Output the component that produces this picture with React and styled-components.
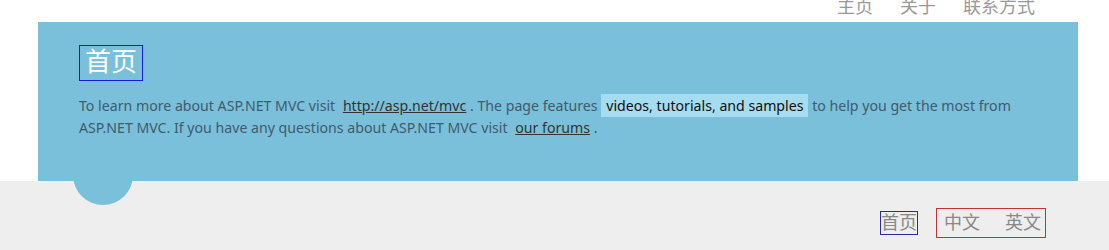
import styled, { createGlobalStyle } from "styled-components";

const GlobalStyle = createGlobalStyle`
  html, body {
    margin: 0;
    padding: 0;
    background: #fff;
    font-family: "Liberation Serif", "Noto Sans CJK SC", serif;
  }
`;

const Header = styled.header`
  height: 22px;
  overflow: hidden;
  display: flex;
  justify-content: flex-end;
  align-items: flex-end;
  padding-right: 74px;
`;

const TopNav = styled.nav`
  display: flex;
  gap: 27px;
  margin-bottom: 6px;

  a {
    font-size: 18px;
    line-height: 18px;
    color: #999;
    text-decoration: none;
  }
`;

const Featured = styled.section`
  position: relative;
  width: 1040px;
  height: 159px;
  box-sizing: border-box;
  margin-left: 38px;
  padding: 23px 32px 0 41px;
  background: #7ac0da;
  z-index: 1;

  &::after {
    content: "";
    position: absolute;
    left: 35px;
    bottom: -24px;
    width: 60px;
    height: 60px;
    border-radius: 50%;
    background: #7ac0da;
  }
`;

const Title = styled.h1`
  display: inline-block;
  margin: 0;
  padding: 0 5px;
  border: 1px solid #1a1ae0;
  font-size: 26px;
  line-height: 34px;
  font-weight: normal;
  color: #fff;
`;

const Lead = styled.p`
  margin: 14px 0 0;
  font-family: "Noto Sans", "Open Sans", sans-serif;
  font-size: 14.15px;
  line-height: 22px;
  color: #3f5b6d;

  a {
    color: #333;
    text-decoration: underline;
    margin-left: 4px;
  }
`;

const Mark = styled.mark`
  background: #a5dcef;
  color: #111;
  padding: 2px 5px;
`;

const Footer = styled.footer`
  height: 69px;
  background: #eeeeee;
  display: flex;
  justify-content: flex-end;
  align-items: flex-start;
  padding: 27px 63px 0 0;
  box-sizing: border-box;
  gap: 18px;
`;

const Box = styled.div`
  display: flex;
  gap: 25px;
  border: 1px solid ${(p) => p.$color};
  padding: ${(p) => p.$pad};
  margin-top: ${(p) => p.$top}px;

  a {
    font-size: 18px;
    line-height: 22px;
    color: #888;
    text-decoration: none;
  }
`;

export default function App() {
  return (
    <>
      <GlobalStyle />
      <Header>
        <TopNav>
          <a href="#">主页</a>
          <a href="#">关于</a>
          <a href="#">联系方式</a>
        </TopNav>
      </Header>
      <Featured>
        <Title>首页</Title>
        <Lead>
          To learn more about ASP.NET MVC visit <a href="#">http://asp.net/mvc</a> . The page
          features <Mark>videos, tutorials, and samples</Mark> to help you get the most
          from ASP.NET MVC. If you have any questions about ASP.NET MVC visit{" "}
          <a href="#">our forums</a> .
        </Lead>
      </Featured>
      <Footer>
        <Box $color="#2b2ba0" $pad="0" $top={3}>
          <a href="#">首页</a>
        </Box>
        <Box $color="#c23434" $pad="3px 4px 3px 7px" $top={0}>
          <a href="#">中文</a>
          <a href="#">英文</a>
        </Box>
      </Footer>
    </>
  );
}
